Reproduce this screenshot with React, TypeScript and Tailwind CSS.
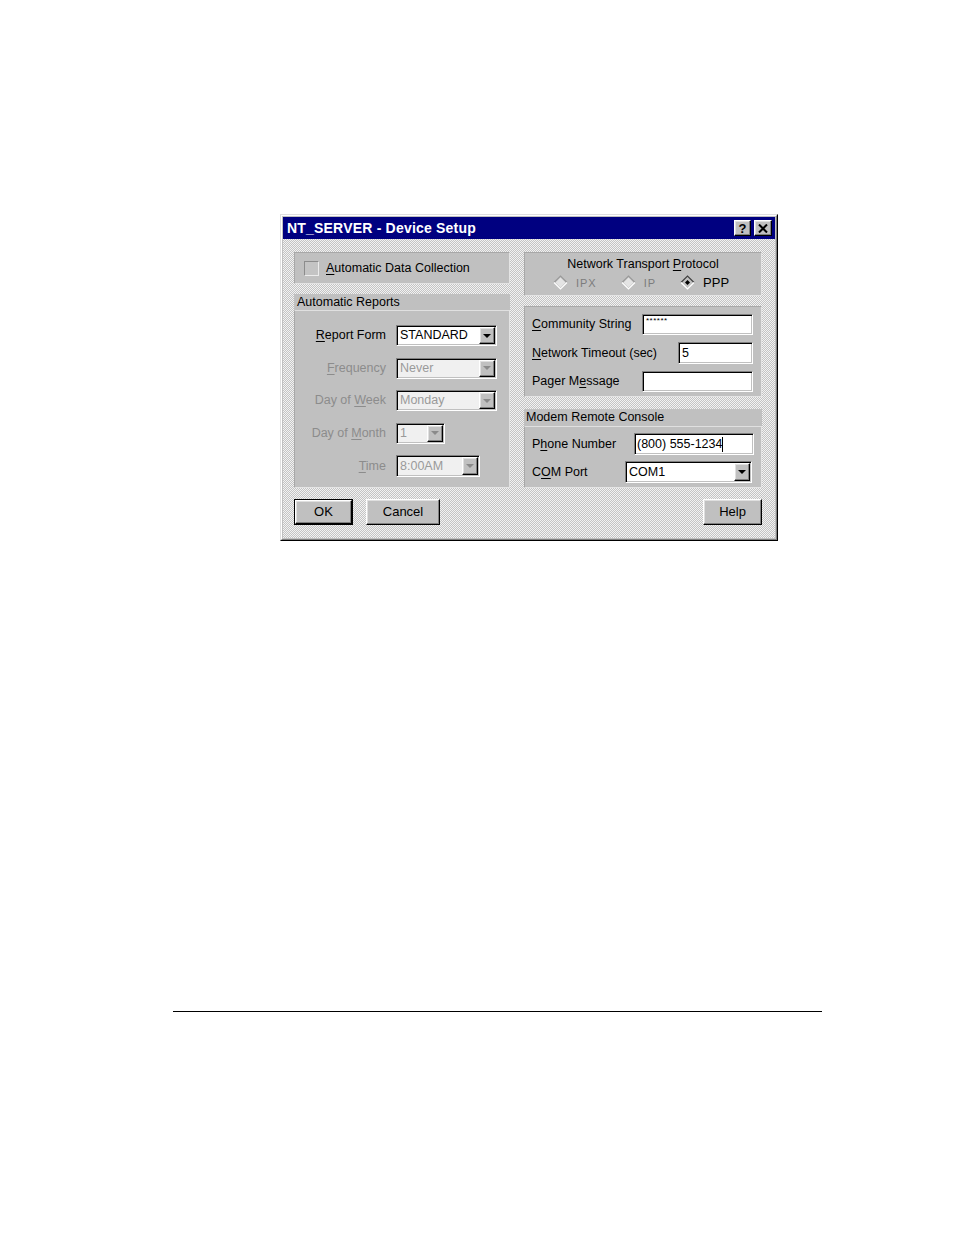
import React from "react";

const sunken =
  "border border-t-[#808080] border-l-[#808080] border-b-white border-r-white shadow-[inset_1px_1px_0_#000,inset_-1px_-1px_0_#c0c0c0]";
const raised =
  "border border-t-white border-l-white border-b-black border-r-black shadow-[inset_-1px_-1px_0_#808080,inset_1px_1px_0_#dfdfdf]";

function U({ children }: { children: React.ReactNode }) {
  return <span className="underline underline-offset-[2px] decoration-1">{children}</span>;
}

function Arrow({ disabled }: { disabled?: boolean }) {
  return (
    <div className={`${raised} h-full w-[16px] ml-auto flex items-center justify-center bg-[#c0c0c0] shrink-0`}>
      <div
        className={`w-0 h-0 border-l-[4px] border-r-[4px] border-t-[4px] border-l-transparent border-r-transparent ${
          disabled ? "border-t-[#8a8a8a]" : "border-t-black"
        }`}
      />
    </div>
  );
}

function Select({
  className,
  value,
  disabled,
}: {
  className: string;
  value: string;
  disabled?: boolean;
}) {
  return (
    <div
      className={`${sunken} ${className} p-[1px] flex items-center ${
        disabled ? "bg-[#f0f0f0] text-[#9a9a9a]" : "bg-white text-black"
      }`}
    >
      <span className="pl-[2px] leading-none whitespace-nowrap">{value}</span>
      <Arrow disabled={disabled} />
    </div>
  );
}

function Diamond({ checked, disabled }: { checked?: boolean; disabled?: boolean }) {
  return (
    <svg width="15" height="15" viewBox="0 0 15 15" className="shrink-0">
      <polygon points="7.5,1 14,7.5 7.5,14 1,7.5" fill="#c0c0c0" />
      <polyline
        points="1,7.5 7.5,1 14,7.5"
        fill="none"
        stroke={disabled ? "#9a9a9a" : "#404040"}
        strokeWidth="1.2"
      />
      <polyline points="1,7.5 7.5,14 14,7.5" fill="none" stroke="#ffffff" strokeWidth="1.2" />
      {disabled && <polygon points="7.5,2.5 12.5,7.5 7.5,12.5 2.5,7.5" fill="#e4e4e4" />}
      {checked && <polygon points="7.5,5 10,7.5 7.5,10 5,7.5" fill="#000" />}
    </svg>
  );
}

export default function App() {
  return (
    <div className="bg-white w-[954px] h-[1235px] font-['Liberation_Sans',Arial,sans-serif] text-[12.5px] text-black overflow-hidden">
      <div className="pt-[214px] pl-[280px]">
        {/* window frame */}
        <div className="w-[498px] h-[327px] border border-t-[#dfdfdf] border-l-[#dfdfdf] border-b-black border-r-black">
          <div className="w-full h-full border border-t-white border-l-white border-b-[#808080] border-r-[#808080] bg-[#c0c0c0] p-[1px] flex flex-col">
            {/* title bar */}
            <div className="h-[22px] bg-[#000080] flex items-center pl-[4px] pr-[3px] shrink-0">
              <span className="text-white font-bold text-[14px] leading-none tracking-[0.2px]">
                NT_SERVER - Device Setup
              </span>
              <div className="ml-auto flex gap-[3px]">
                <div className={`${raised} w-[17px] h-[16px] bg-[#c0c0c0] flex items-center justify-center font-bold text-[13px] leading-none`}>
                  ?
                </div>
                <div className={`${raised} w-[18px] h-[16px] bg-[#c0c0c0] flex items-center justify-center`}>
                  <svg width="10" height="9" viewBox="0 0 10 9">
                    <path d="M1 0.5 L9 8.5 M9 0.5 L1 8.5" stroke="#000" strokeWidth="2" />
                  </svg>
                </div>
              </div>
            </div>

            {/* body */}
            <div className="flex-1 bg-[repeating-conic-gradient(#c4c4c4_0%_25%,#f2f2f2_0%_50%)] bg-size-[2px_2px] pt-[13px] pl-[11px] pr-[12px] flex flex-col">
              <div className="flex gap-[14px]">
                {/* left column */}
                <div className="w-[216px] flex flex-col">
                  <div className="h-[32px] bg-[#c0c0c0] border border-t-[#a8a8a8] border-l-[#a8a8a8] border-b-[#e4e4e4] border-r-[#e4e4e4] flex items-center pl-[9px]">
                    <div className="w-[15px] h-[15px] bg-[#c4c4c4] border border-t-[#8c8c8c] border-l-[#8c8c8c] border-b-[#ececec] border-r-[#ececec]" />
                    <span className="ml-[7px]">
                      <U>A</U>utomatic Data Collection
                    </span>
                  </div>
                  <div className="mt-[10px] h-[16px] bg-[#c0c0c0] pl-[3px] flex items-center">
                    Automatic Reports
                  </div>
                  <div className="h-[178px] bg-[#c0c0c0] border border-t-[#e0e0e0] border-l-[#a8a8a8] border-b-[#e4e4e4] border-r-[#e4e4e4] pt-[14px] grid grid-cols-[91px_auto] gap-x-[10px] gap-y-[11.5px] content-start items-center">
                    <span className="text-right">
                      <U>R</U>eport Form
                    </span>
                    <Select className="w-[101px] h-[21px]" value="STANDARD" />
                    <span className="text-right text-[#8c8c8c]">
                      <U>F</U>requency
                    </span>
                    <Select className="w-[101px] h-[21px]" value="Never" disabled />
                    <span className="text-right text-[#8c8c8c]">
                      Day of <U>W</U>eek
                    </span>
                    <Select className="w-[101px] h-[21px]" value="Monday" disabled />
                    <span className="text-right text-[#8c8c8c]">
                      Day of <U>M</U>onth
                    </span>
                    <Select className="w-[49px] h-[21px]" value="1" disabled />
                    <span className="text-right text-[#8c8c8c]">
                      <U>T</U>ime
                    </span>
                    <Select className="w-[84px] h-[22px]" value="8:00AM" disabled />
                  </div>
                </div>

                {/* right column */}
                <div className="w-[238px] flex flex-col">
                  <div className="h-[44px] bg-[#c0c0c0] border border-t-[#a8a8a8] border-l-[#a8a8a8] border-b-[#e4e4e4] border-r-[#e4e4e4] flex flex-col items-center pt-[4px]">
                    <span className="leading-[15px]">
                      Network Transport <U>P</U>rotocol
                    </span>
                    <div className="flex items-center gap-[24px] mt-[1px] pr-[4px]">
                      <div className="flex items-center gap-[8px]">
                        <Diamond disabled />
                        <span className="text-[11px] text-[#7c7c7c] tracking-[1px]">IPX</span>
                      </div>
                      <div className="flex items-center gap-[8px]">
                        <Diamond disabled />
                        <span className="text-[11px] text-[#7c7c7c] tracking-[1px]">IP</span>
                      </div>
                      <div className="flex items-center gap-[8px]">
                        <Diamond checked />
                        <span className="text-[13px]">PPP</span>
                      </div>
                    </div>
                  </div>

                  <div className="mt-[10px] h-[91px] bg-[#c0c0c0] border border-t-[#a8a8a8] border-l-[#a8a8a8] border-b-[#e4e4e4] border-r-[#e4e4e4] pt-[7px] pl-[7px] pr-[8px] flex flex-col gap-[7px]">
                    <div className="flex items-center justify-between">
                      <span>
                        <U>C</U>ommunity String
                      </span>
                      <div className={`${sunken} w-[111px] h-[21px] bg-white pl-[3px] pt-[2px] text-[8px] leading-none tracking-[0.5px]`}>
                        ******
                      </div>
                    </div>
                    <div className="flex items-center justify-between">
                      <span>
                        <U>N</U>etwork Timeout (sec)
                      </span>
                      <div className={`${sunken} w-[75px] h-[22px] bg-white pl-[3px] flex items-center`}>5</div>
                    </div>
                    <div className="flex items-center justify-between">
                      <span>
                        Pager M<U>e</U>ssage
                      </span>
                      <div className={`${sunken} w-[111px] h-[21px] bg-white`} />
                    </div>
                  </div>

                  <div className="mt-[12px] h-[17px] bg-[#c0c0c0] pl-[2px] flex items-center">
                    Modem Remote Console
                  </div>
                  <div className="h-[62px] bg-[#c0c0c0] border border-t-[#e0e0e0] border-l-[#a8a8a8] border-b-[#e4e4e4] border-r-[#e4e4e4] pt-[6px] pl-[7px] flex flex-col gap-[6px]">
                    <div className="flex items-center pr-[7px]">
                      <span>
                        P<U>h</U>one Number
                      </span>
                      <div className={`${sunken} ml-auto w-[120px] h-[22px] bg-white pl-[2px] flex items-center`}>
                        <span>(800) 555-1234</span>
                        <span className="w-[1px] h-[15px] bg-black" />
                      </div>
                    </div>
                    <div className="flex items-center pr-[9px]">
                      <span>
                        C<U>O</U>M Port
                      </span>
                      <Select className="ml-auto w-[127px] h-[22px]" value="COM1" />
                    </div>
                  </div>
                </div>
              </div>

              {/* buttons */}
              <div className="mt-[11px] flex items-center pr-[1px]">
                <div className="w-[59px] h-[26px] border border-black">
                  <div className={`${raised} w-full h-full bg-[#c0c0c0] flex items-center justify-center text-[13px]`}>
                    OK
                  </div>
                </div>
                <div className={`${raised} ml-[13px] w-[74px] h-[26px] bg-[#c0c0c0] flex items-center justify-center text-[13px]`}>
                  Cancel
                </div>
                <div className={`${raised} ml-auto w-[59px] h-[26px] bg-[#c0c0c0] flex items-center justify-center text-[13px]`}>
                  Help
                </div>
              </div>
            </div>
          </div>
        </div>
      </div>
      <div className="mt-[470px] ml-[173px] w-[649px] h-[1px] bg-black" />
    </div>
  );
}
